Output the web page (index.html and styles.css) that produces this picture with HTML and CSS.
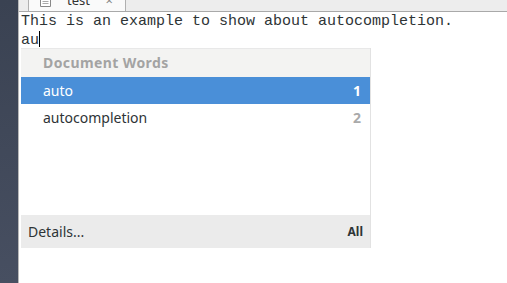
FILE: index.html
```html
<!DOCTYPE html>
<html lang="en">
<head>
  <meta charset="UTF-8">
  <title>Autocompletion</title>
  <link rel="stylesheet" href="styles.css">
</head>
<body>
  <div class="window">
    <div class="sidebar"></div>
    <div class="main">
      <div class="tabbar">
        <div class="tab">
          <svg class="doc-icon" width="11" height="13" viewBox="0 0 11 13">
            <path d="M0.5 0.5h7l3 3v9h-10z" fill="#fff" stroke="#888"/>
            <path d="M2.5 5.5h6M2.5 7.5h6M2.5 9.5h6" stroke="#aaa"/>
          </svg>
          <span class="tab-title">test</span>
          <span class="tab-close">×</span>
        </div>
      </div>
      <div class="editor">
        <div class="line">This is an example to show about autocompletion.</div>
        <div class="line">au<span class="cursor"></span></div>

        <div class="completion">
          <div class="completion-header">Document Words</div>
          <div class="completion-list">
            <div class="item selected"><span>auto</span><span class="key">1</span></div>
            <div class="item"><span>autocompletion</span><span class="key">2</span></div>
          </div>
          <div class="completion-footer"><span>Details...</span><span class="all">All</span></div>
        </div>
      </div>
    </div>
  </div>
</body>
</html>
```

FILE: styles.css
```css
body {
  margin: 0;
  font-family: "Noto Sans", sans-serif;
  background: #fff;
}
.window {
  display: flex;
  height: 283px;
}
.sidebar {
  width: 18px;
  background: linear-gradient(#3a4252, #474f61);
  border-right: 1px solid #b8b8b8;
}
.main {
  flex: 1;
  display: flex;
  flex-direction: column;
}
.tabbar {
  height: 11px;
  background: #ededed;
  border-bottom: 1px solid #a9a9a9;
  overflow: hidden;
  position: relative;
}
.tab {
  position: absolute;
  left: 9px;
  top: -12px;
  width: 98px;
  height: 23px;
  background: #fafafa;
  border: 1px solid #b0b0b0;
  border-bottom: none;
  border-radius: 3px 3px 0 0;
  display: flex;
  align-items: center;
  gap: 8px;
  padding-left: 11px;
  box-sizing: border-box;
  font-size: 13px;
  color: #333;
}
.tab-title {
  flex: 1;
  padding-left: 8px;
}
.tab-close {
  margin-right: 12px;
  color: #888;
}
.editor {
  flex: 1;
  position: relative;
  padding: 1px 0 0 2px;
  font-family: "Liberation Mono", monospace;
  font-size: 15px;
  color: #2e3436;
}
.line {
  height: 18px;
  line-height: 18px;
}
.cursor {
  display: inline-block;
  width: 1px;
  height: 16px;
  background: #000;
  vertical-align: -3px;
}
.completion {
  position: absolute;
  left: 2px;
  top: 36px;
  width: 349px;
  height: 200px;
  display: flex;
  flex-direction: column;
  border-right: 1px solid #e2e2e2;
  font-family: "Noto Sans", sans-serif;
  font-size: 14px;
}
.completion-header {
  height: 28px;
  line-height: 28px;
  background: #f3f3f2;
  border-top: 1px solid #e8e8e8;
  padding-left: 22px;
  font-weight: bold;
  letter-spacing: 0.4px;
  color: #a3a3a3;
}
.completion-list {
  flex: 1;
  background: #fff;
}
.item {
  height: 27px;
  display: flex;
  align-items: center;
  justify-content: space-between;
  padding: 0 9px 0 22px;
  color: #2e3436;
}
.item.selected {
  background: #4a8fd8;
  color: #fff;
}
.key {
  font-weight: bold;
  color: #aaa;
}
.selected .key {
  color: #fff;
}
.completion-footer {
  height: 33px;
  display: flex;
  align-items: center;
  justify-content: space-between;
  padding: 0 7px;
  background: #ebebeb;
  color: #2e3436;
}
.all {
  font-weight: bold;
  font-size: 12px;
}
```
